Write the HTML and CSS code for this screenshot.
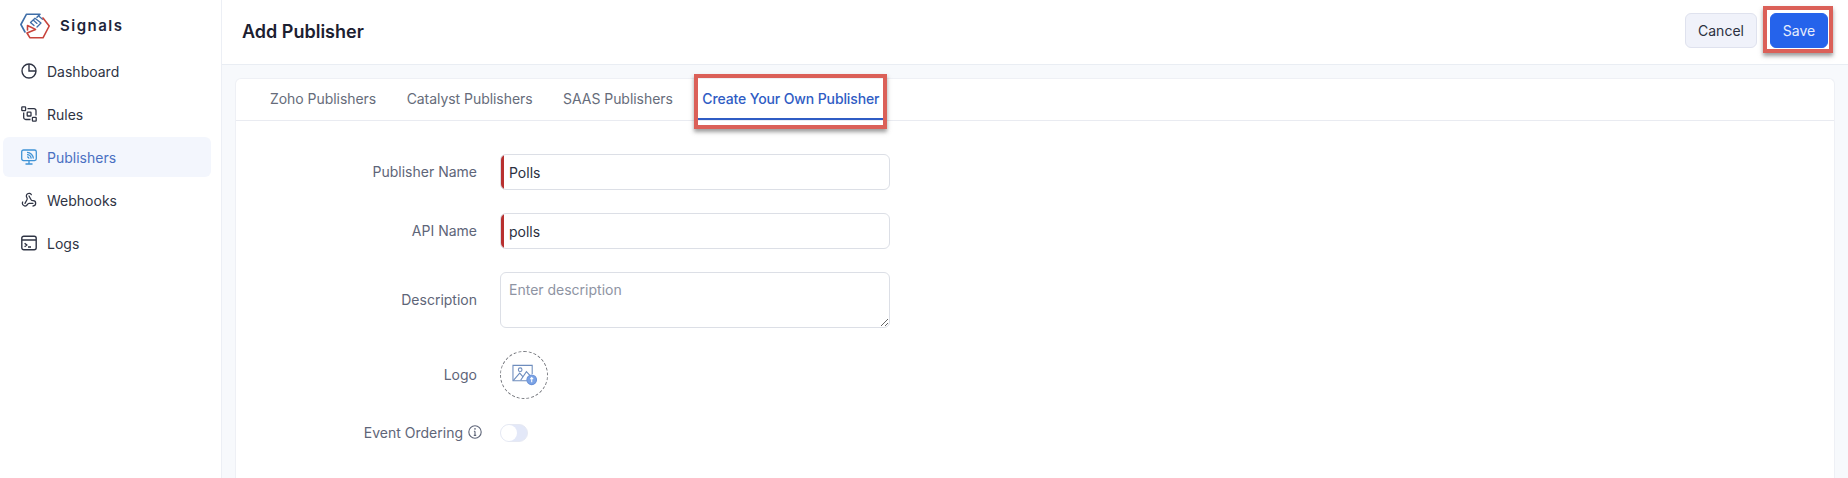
FILE: index.html
```html
<!DOCTYPE html>
<html lang="en">
<head>
<meta charset="utf-8">
<title>Add Publisher</title>
<link rel="stylesheet" href="styles.css">
</head>
<body>
<div class="app">
  <aside class="sidebar">
    <div class="brand">
      <svg class="brand-logo" viewBox="0 0 30 26" fill="none" stroke-width="1.6" stroke-linejoin="round" stroke-linecap="round">
        <path d="M5 19 L.9 11.5 L6.5 1.2 H20 L17 4.2" stroke="#3f6ea8"/>
        <path d="M10.5 9.5 L15 5.2 L21 10 L17 14 M19 3.2 L22.5 6.2 M13.2 7 L17 10.4 M10.5 9.5 L14 12.5" stroke="#3f6ea8" stroke-width="1.3"/>
        <path d="M23 5 L29.2 13 L23 24.8 H10 L7 20 L15.5 16.4 L7.5 12.5 L7.5 17" stroke="#c8443c"/>
      </svg>
      <span class="brand-name">Signals</span>
    </div>
    <nav class="nav">
      <a class="nav-item">
        <svg class="nav-icon" viewBox="0 0 16 16" fill="none" stroke="currentColor" stroke-width="1.4"><circle cx="8" cy="8" r="7"/><path d="M8 1 V8 H15"/></svg>
        <span>Dashboard</span>
      </a>
      <a class="nav-item">
        <svg class="nav-icon" viewBox="0 0 16 16" fill="none" stroke="currentColor" stroke-width="1.3"><rect x=".8" y=".8" width="3.8" height="3.8" rx=".6"/><rect x="6.2" y="6.2" width="3.8" height="3.8" rx=".6"/><rect x="11.4" y="11.4" width="3.8" height="3.8" rx=".6"/><path d="M6.5 2.7 H13 a2 2 0 0 1 2 2 V9.5 M2.7 6.5 V11.5 a2 2 0 0 0 2 2 H9.5"/></svg>
        <span>Rules</span>
      </a>
      <a class="nav-item nav-item-active">
        <svg class="nav-icon" viewBox="0 0 16 16" fill="none" stroke="#3f93d6" stroke-width="1.3"><rect x=".7" y="1" width="14.6" height="10.6" rx="1.8"/><path d="M8 11.6 V15 M4.5 15 H11.5"/><path d="M6 3.4 a6.4 6.4 0 0 1 6.4 6.2 M6 5.6 a4.2 4.2 0 0 1 4.2 4 M6 7.8 a2 2 0 0 1 2 1.8"/></svg>
        <span>Publishers</span>
      </a>
      <a class="nav-item">
        <svg class="nav-icon" viewBox="0 0 24 24" fill="none" stroke="currentColor" stroke-width="1.9" stroke-linecap="round" stroke-linejoin="round"><path d="M18 16.98h-5.99c-1.1 0-1.95.94-2.48 1.9A4 4 0 0 1 2 17c.01-.7.2-1.4.57-2"/><path d="m6 17 3.13-5.78c.53-.97.1-2.18-.5-3.1a4 4 0 1 1 6.89-4.06"/><path d="m12 6 3.13 5.73C15.66 12.7 16.9 13 18 13a4 4 0 0 1 0 8"/></svg>
        <span>Webhooks</span>
      </a>
      <a class="nav-item">
        <svg class="nav-icon" viewBox="0 0 16 16" fill="none" stroke="currentColor" stroke-width="1.4"><rect x=".8" y="1.2" width="14.4" height="13.6" rx="2"/><path d="M1 5 H15 M3.6 8.2 L5.8 10 L3.6 11.8 M7 12 H10"/></svg>
        <span>Logs</span>
      </a>
    </nav>
  </aside>
  <main class="main">
    <header class="topbar">
      <h1 class="title">Add Publisher</h1>
      <div class="actions">
        <button class="btn btn-cancel">Cancel</button>
        <button class="btn btn-save marked marked-save">Save</button>
      </div>
    </header>
    <section class="content">
      <div class="card">
        <div class="tabs">
          <a class="tab">Zoho Publishers</a>
          <a class="tab">Catalyst Publishers</a>
          <a class="tab">SAAS Publishers</a>
          <a class="tab tab-active marked marked-tab">Create Your Own Publisher</a>
        </div>
        <form class="form">
          <label class="label">Publisher Name</label>
          <input class="field field-required" value="Polls">
          <label class="label">API Name</label>
          <input class="field field-required" value="polls">
          <label class="label">Description</label>
          <textarea class="field field-area" placeholder="Enter description"></textarea>
          <label class="label">Logo</label>
          <div class="logo-upload">
            <svg class="logo-icon" viewBox="0 0 26 22" fill="none" stroke="#6d8cbd" stroke-width="1.1">
              <path d="M16 17 H1 V1 H21 V10"/>
              <circle cx="8.5" cy="5.5" r="1.9"/>
              <path d="M1.5 16.5 L8 9 L11.5 13 M9 16.5 L15 7.5 L20 13"/>
              <circle cx="20.5" cy="16" r="5" fill="#7ba3e6" stroke="#6b93d8"/>
              <path d="M20.5 18.6 V13.8 M19 15.2 L20.5 13.6 L22 15.2" stroke="#fff"/>
            </svg>
          </div>
          <label class="label label-info">Event Ordering
            <svg class="info-icon" viewBox="0 0 14 14" fill="none" stroke="#5e6578" stroke-width="1.1"><circle cx="7" cy="7" r="6.2"/><path d="M7 6.2 V10.4 M5.8 10.4 H8.2 M5.9 6.2 H7"/><circle cx="7" cy="3.9" r=".8" fill="#5e6578" stroke="none"/></svg>
          </label>
          <div class="toggle"><span class="toggle-knob"></span></div>
        </form>
      </div>
    </section>
  </main>
</div>
</body>
</html>
```
FILE: styles.css
```css
* { box-sizing: border-box; }
html, body { margin: 0; height: 100%; overflow: hidden; }
body { font-family: Inter, "Noto Sans", sans-serif; font-size: 14px; color: #2b3040; background: #fff; }
.app { display: flex; height: 478px; }

.sidebar { width: 222px; flex: none; border-right: 1px solid #eceff5; background: #fff; }
.brand { display: flex; align-items: center; height: 51px; padding-left: 20px; gap: 10px; }
.brand-logo { width: 30px; height: 26px; }
.brand-name { font-size: 15px; font-weight: 600; letter-spacing: 1.5px; color: #20243a; }
.nav { display: flex; flex-direction: column; gap: 3px; padding-left: 3px; }
.nav-item { display: flex; align-items: center; gap: 10px; width: 208px; height: 40px; padding-left: 18px; border-radius: 6px; color: #2f3444; }
.nav-item-active { background: #f3f6fd; color: #4a70c2; }
.nav-icon { width: 16px; height: 16px; flex: none; }

.main { flex: 1; display: flex; flex-direction: column; min-width: 0; }
.topbar { display: flex; align-items: center; justify-content: space-between; height: 65px; flex: none; padding: 0 20px 1px 20px; border-bottom: 1px solid #e9edf3; background: #fff; }
.title { margin: 0; font-size: 18px; font-weight: 600; color: #1c2030; }
.actions { display: flex; gap: 13px; margin-bottom: 2px; }
.btn { height: 35px; border-radius: 6px; font: 400 14px Inter, "Noto Sans", sans-serif; padding: 0; }
.btn-cancel { width: 72px; background: #f0f2fa; border: 1px solid #dfe2ee; color: #2b3040; }
.btn-save { width: 58px; background: #2563eb; border: 1px solid #2563eb; color: #e6edfd; }

.marked { position: relative; }
.marked::after { content: ""; position: absolute; border: 4px solid #db6058; box-shadow: 0 3px 4px rgba(60, 60, 60, .5); pointer-events: none; }
.marked-save::after { inset: -8px -6px -6px -8px; }
.marked-tab::after { inset: -5px -3px -9px -3px; }

.content { flex: 1; min-height: 0; padding: 13px 13px 0 13px; background: #f7f9fc; }
.card { height: 100%; background: #fff; border: 1px solid #eef0f5; border-bottom: 0; border-radius: 6px 6px 0 0; }
.tabs { display: flex; gap: 30.5px; height: 42px; padding-left: 34px; border-bottom: 1px solid #e9ebf1; }
.tab { display: flex; align-items: center; height: 41px; padding-bottom: 3px; color: #666c7a; letter-spacing: -.05px; }
.tab-active { color: #2f5cc4; font-weight: 500; letter-spacing: -.12px; box-shadow: inset 0 -2px 0 #2f5cc4; padding: 0 5px 3px; margin: 0 -5px 0 -6px; }

.form { display: grid; grid-template-columns: 241px 390px; column-gap: 23px; row-gap: 23px; padding-top: 33px; align-items: center; }
.label { padding-bottom: 2px; text-align: right; color: #5e6578; line-height: 17px; }
.label-info { display: flex; align-items: center; justify-content: flex-end; gap: 5px; margin-right: -5px; padding-bottom: 0; }
.info-icon { width: 14px; height: 14px; flex: none; }
.field { display: block; width: 390px; height: 36px; padding: 0 8px; border: 1px solid #dcdfe6; border-radius: 6px; font: 400 14px Inter, "Noto Sans", sans-serif; color: #2b3040; background: #fff; outline: 0; }
.field-required { background: linear-gradient(#b8302f, #b8302f) left top / 4px 100% no-repeat border-box, #fff; }
.field-area { height: 56px; padding: 8px; resize: both; }
.field-area::placeholder { color: #8e94a3; opacity: 1; }
.logo-upload { display: flex; align-items: center; justify-content: center; width: 48px; height: 48px; border: 1px dashed #77797f; border-radius: 50%; }
.logo-icon { width: 25px; height: 22px; margin-left: 1px; }
.toggle { display: flex; align-items: center; width: 28px; height: 18px; margin-top: 2px; border: 1px solid #e6e9f3; border-radius: 9px; background: #e3e8f8; }
.toggle-knob { width: 16px; height: 16px; border-radius: 50%; background: #fff; }
```
